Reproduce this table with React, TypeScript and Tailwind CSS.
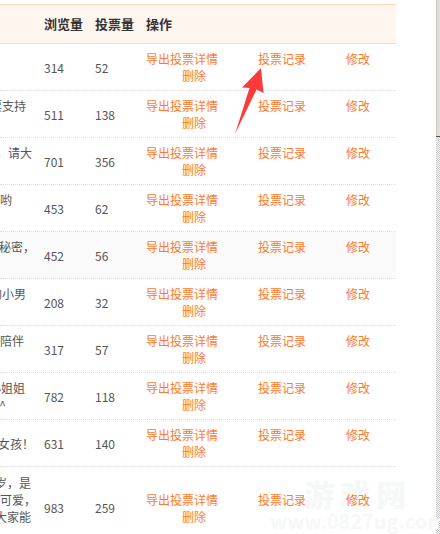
import React from 'react';

interface TitleLine {
  text: string;
  width: string;
}

interface VoteRow {
  views: number;
  votes: number;
  lines: TitleLine[];
  tall?: boolean;
  shaded?: boolean;
}

const rows: VoteRow[] = [
  { views: 314, votes: 52, lines: [{ text: '', width: 'w-[26px]' }, { text: '', width: 'w-[26px]' }] },
  { views: 511, votes: 138, lines: [{ text: '请大家投票支持', width: 'w-[26px]' }, { text: '', width: 'w-[26px]' }] },
  { views: 701, votes: 356, lines: [{ text: '好可爱，请大', width: 'w-[32px]' }, { text: '', width: 'w-[26px]' }] },
  { views: 453, votes: 62, lines: [{ text: '快来投票哟', width: 'w-[12px]' }, { text: '', width: 'w-[26px]' }] },
  { views: 452, votes: 56, shaded: true, lines: [{ text: '小秘密，', width: 'w-[35px]' }, { text: '', width: 'w-[26px]' }] },
  { views: 208, votes: 32, lines: [{ text: '可爱的小男', width: 'w-[26px]' }, { text: '', width: 'w-[26px]' }] },
  { views: 317, votes: 57, lines: [{ text: '一直都陪伴', width: 'w-[24px]' }, { text: '', width: 'w-[26px]' }] },
  { views: 782, votes: 118, lines: [{ text: '小姐姐', width: 'w-[25px]' }, { text: '^_^', width: 'w-[6px]' }] },
  { views: 631, votes: 140, lines: [{ text: '的女孩！', width: 'w-[34px]' }] },
  {
    views: 983,
    votes: 259,
    tall: true,
    lines: [
      { text: '今年三岁，是', width: 'w-[31px]' },
      { text: '很可爱，', width: 'w-[36px]' },
      { text: '希望大家能', width: 'w-[31px]' },
      { text: '', width: 'w-[31px]' },
    ],
  },
];

const OpLinks = () => (
  <div className="grid grid-cols-[112px_88px_1fr] items-start text-[#ff7a2b]">
    <div>
      <div className="whitespace-nowrap">导出投票详情</div>
      <div className="pl-9">删除</div>
    </div>
    <div>投票记录</div>
    <div>修改</div>
  </div>
);

export default function App() {
  return (
    <div className="relative flex h-[534px] w-[440px] overflow-hidden bg-white font-['Noto_Sans_CJK_SC',sans-serif]">
      <div className="relative w-[436px] pt-1">
        {/* Faint watermark, behind the table */}
        <div className="pointer-events-none absolute left-[270px] top-[476px] flex flex-col items-center text-[#f6f8f8]">
          <div className="text-[30px] font-black leading-[34px] tracking-[6px]">游戏网</div>
          <div className="text-[20px] font-bold leading-[22px]">www.0827ug.com</div>
        </div>

        <div className="relative w-[396px]">
          {/* Header */}
          <div className="grid h-[40px] grid-cols-[44px_51px_51px_250px] items-center border-y border-[#fbdcb5] bg-[#fff6ef] text-[13px] font-bold text-[#333]">
            <div />
            <div>浏览量</div>
            <div>投票量</div>
            <div>操作</div>
          </div>

          {/* Rows */}
          {rows.map((row, i) => (
            <div
              key={i}
              className={`grid grid-cols-[44px_51px_51px_250px] items-center border-b border-dotted border-[#dcdcdc] text-[12px] leading-[17px] text-[#555] ${
                row.tall ? 'h-[82px]' : 'h-[47px]'
              } ${row.shaded ? 'bg-[#fafafa]' : ''}`}
            >
              <div className="flex flex-col overflow-hidden">
                {row.lines.map((line, j) => (
                  <div key={j} className={`flex h-[17px] justify-end whitespace-nowrap ${line.width}`}>
                    <span>{line.text}</span>
                  </div>
                ))}
              </div>
              <div>{row.views}</div>
              <div>{row.votes}</div>
              <OpLinks />
            </div>
          ))}
        </div>

        {/* Red annotation arrow */}
        <svg className="pointer-events-none absolute left-0 top-0" width="436" height="534">
          <polygon
            points="261,68 263.5,93 256.5,89.5 235,134 249.5,88 242,87.5"
            fill="#ff3a3a"
          />
        </svg>
      </div>

      {/* Right edge strip */}
      <div className="flex w-[4px] flex-col">
        <div className="h-[136px] border-l border-[#c9c5bd] bg-[#e2dfd9]" />
        <div className="h-px bg-[#555]" />
        <div className="flex-1 bg-[repeating-conic-gradient(#c4c4c4_0_25%,#ffffff_0_50%)] bg-[length:2px_2px]" />
      </div>
    </div>
  );
}
